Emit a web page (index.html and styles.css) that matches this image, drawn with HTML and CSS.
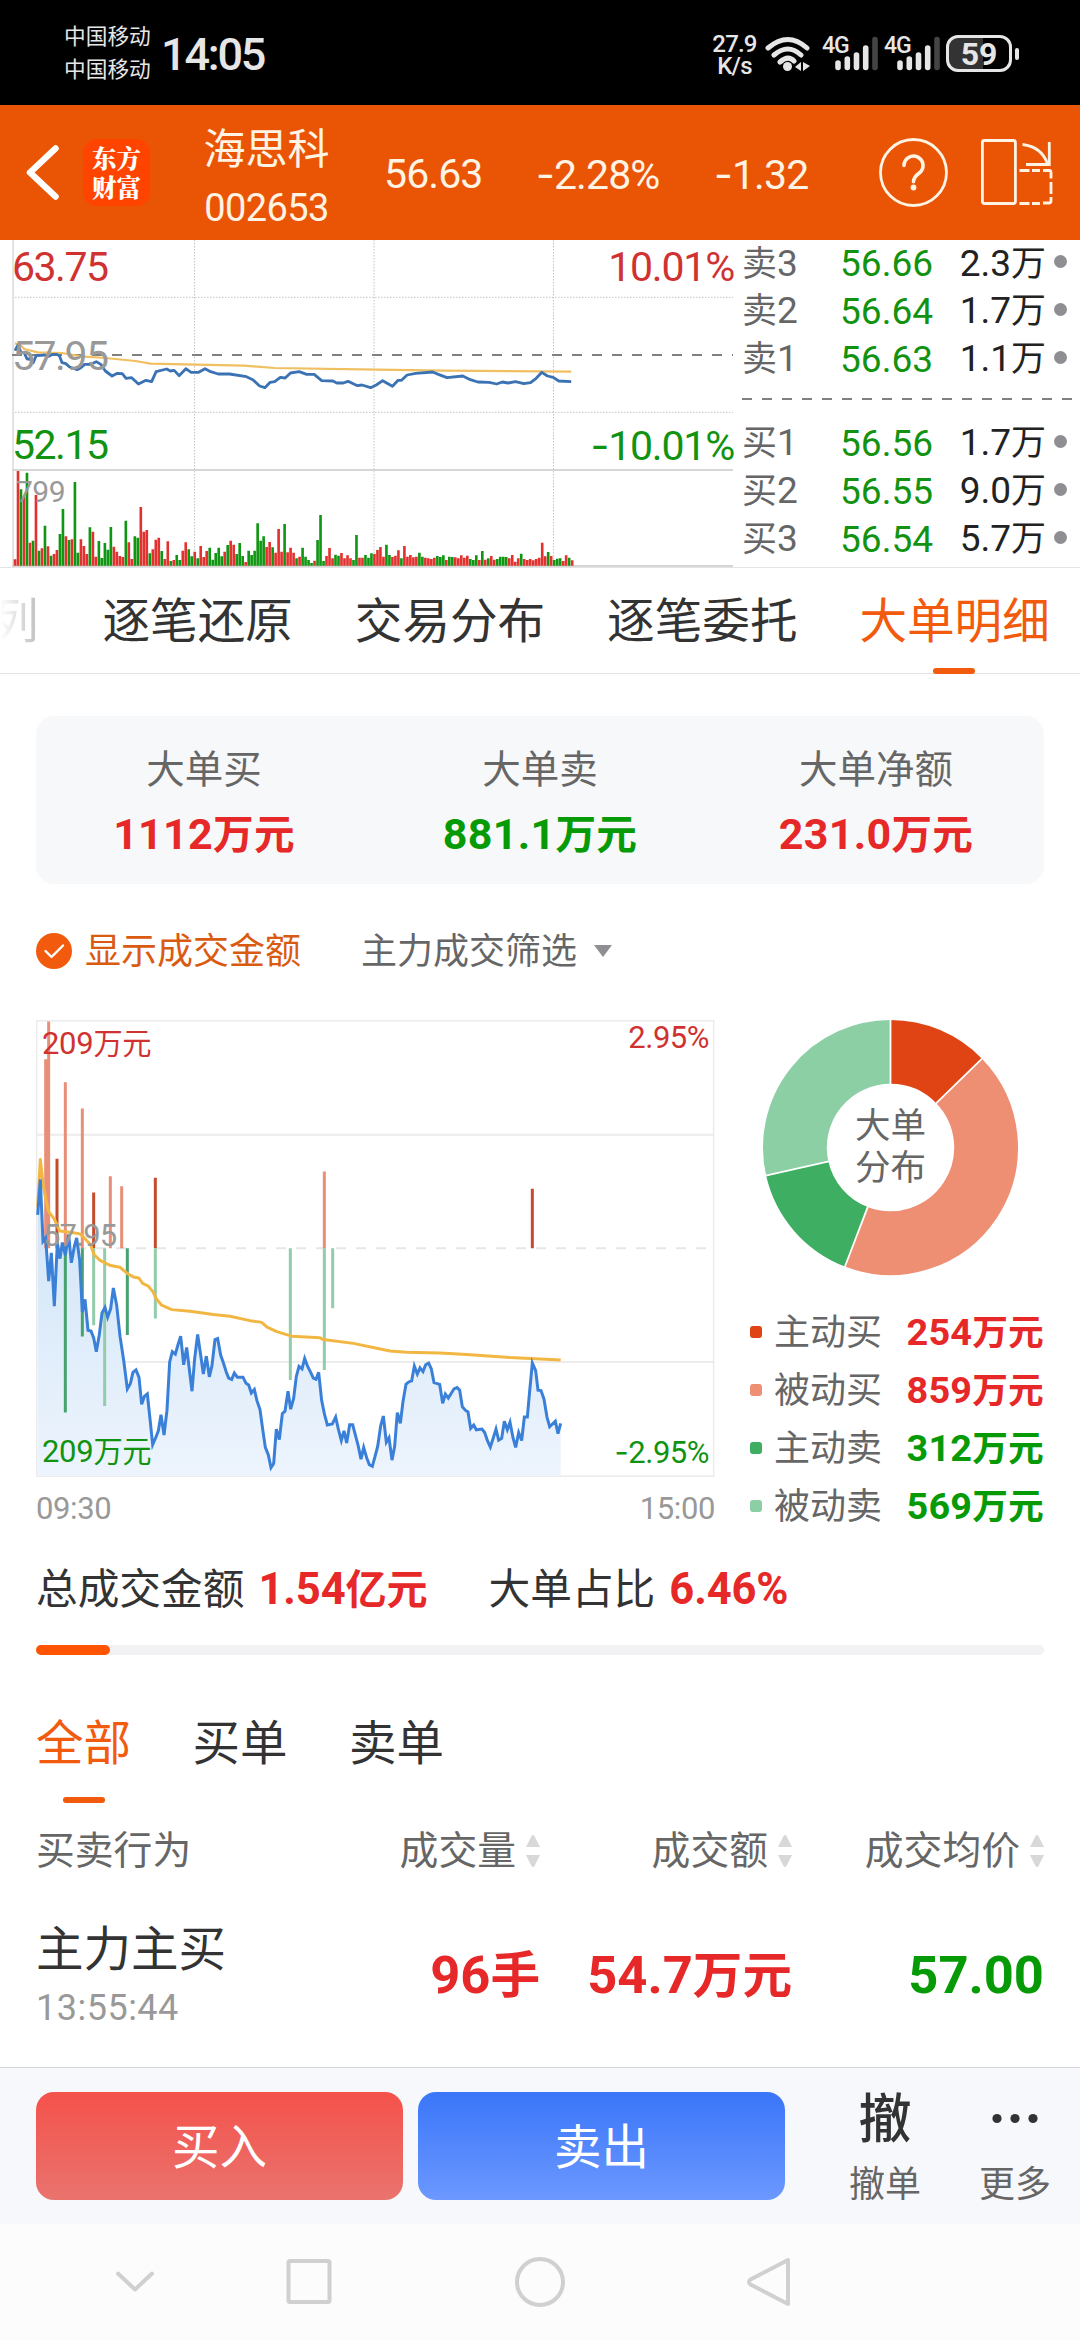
FILE: index.html
```html
<!DOCTYPE html>
<html lang="zh-CN">
<head>
<meta charset="utf-8">
<title>海思科 002653</title>
<link rel="stylesheet" href="styles.css">
</head>
<body>
<div class="status">
  <div class="carriers"><span>中国移动</span><span>中国移动</span></div>
  <div class="clock">14:05</div>
  <div class="netspeed"><span>27.9</span><span>K/s</span></div>
  <svg class="wifi" width="46" height="36" viewBox="0 0 46 36" fill="none" stroke="#e6e6e6" stroke-width="5" stroke-linecap="round">
    <path d="M3 12Q23 -5 42 12M9 19Q23 7 36 19M15 26Q23 19 29 25"/>
    <circle cx="22.500" cy="30.500" r="4.500" fill="#e6e6e6" stroke="none"/>
    <path d="M36 26v9l-6-4zM38 26v9l7-5z" fill="#e6e6e6" stroke="none"/>
  </svg>
  <div class="signal"><span>4G</span>
    <svg width="52" height="36" viewBox="0 0 52 36" stroke="#e6e6e6" stroke-width="5.600" stroke-linecap="round"><path d="M10 28v4.500M19.300 24v8.500M28.500 20v12.500M37.700 13v19.500"/><path d="M47 4.500v28" stroke="#444"/></svg>
  </div>
  <div class="signal second"><span>4G</span>
    <svg width="52" height="36" viewBox="0 0 52 36" stroke="#e6e6e6" stroke-width="5.600" stroke-linecap="round"><path d="M10 28v4.500M19.300 24v8.500M28.500 20v12.500M37.700 13v19.500"/><path d="M47 4.500v28" stroke="#444"/></svg>
  </div>
  <div class="battery"><span>59</span></div>
  <i class="battery-tip"></i>
</div>

<header class="header">
  <svg class="back" width="83" height="135" viewBox="0 0 83 135" fill="none" stroke="#fff" stroke-width="6.500" stroke-linecap="round" stroke-linejoin="round"><path d="M55.500 43.500L30 67.500L55.500 91.500"/></svg>
  <div class="logo"><span>东方</span><span>财富</span></div>
  <div class="stock"><b>海思科</b><span>002653</span></div>
  <div class="quote">56.63</div>
  <div class="quote"><s>-</s>2.28%</div>
  <div class="quote"><s>-</s>1.32</div>
  <svg width="70" height="135" viewBox="0 0 70 135" fill="none" stroke="#fff3e4" stroke-width="2.800" stroke-linecap="round"><circle cx="35.500" cy="67.500" r="33"/><path d="M26 60.500a9.500 9.500 0 1 1 15 7.800q-5.500 4-5.500 8.400" stroke-width="3.600"/><circle cx="35.500" cy="82.500" r="2.900" fill="#fff3e4" stroke="none"/></svg>
  <svg class="rotate" width="80" height="135" viewBox="0 0 80 135" fill="none" stroke="#fff3e4" stroke-width="2.800"><rect x="4.400" y="35.500" width="33" height="63" rx="2"/><path d="M44.500 39.500Q64 42 69.500 59M71.300 37v22.500H48"/><path d="M41.500 65.500h10M54 65.500h8M65 65.500h6a2 2 0 0 1 2 2v6M73 77v12M73 92v4a2 2 0 0 1-2 2h-6M62 98.500h-8M51.500 98.500h-10"/></svg>
</header>

<section class="market">
  <div class="minute">
    <svg width="721" height="327" viewBox="32 15 1916 981" preserveAspectRatio="none" fill="none">
      <g class="grid" stroke="#c4c4c4" stroke-dasharray="1.500 1.500"><path d="M517 15V992M994 15V992M1471 15V992M32 187H1948M32 532H1948"/></g>
      <path class="thin" d="M35 15V992" stroke="#e2e2e2" stroke-width="2"/>
      <path class="thin" d="M32 705H1948M32 993H1948" stroke="#d6d6d6" stroke-width="2"/>
      <path class="thin" d="M32 360H1948" stroke="#808080" stroke-width="1.800" stroke-dasharray="10 10"/>
      <g id="volume" stroke-width="7"></g>
      <polyline class="thin" stroke="#efbf60" stroke-width="2.200" points="40,325 52,328 65,342 100,352 165,354 215,364 280,369 360,378 400,386 520,389 650,392 730,399 1000,404 1180,407 1518,410"/>
      <polyline class="thin" stroke="#3a72b4" stroke-width="2.800" stroke-linejoin="round" points="40,347 48,330 56,352 64,352 72,372 80,372 88,384 96,362 120,360 130,364 140,358 150,358 158,362 165,383 175,386 185,396 205,404 215,398 225,388 240,388 256,380 268,388 280,408 298,423 312,415 325,416 335,430 350,428 368,447 388,436 403,440 415,410 443,402 453,408 463,406 476,422 494,401 508,412 528,412 545,401 560,410 580,417 610,417 655,425 672,434 690,453 704,458 718,442 730,440 745,427 758,429 772,414 795,410 815,418 835,418 855,437 885,438 895,444 912,444 925,439 950,452 962,450 985,458 1000,450 1017,437 1043,454 1058,436 1067,436 1082,420 1105,415 1150,411 1165,418 1188,428 1230,423 1250,434 1270,441 1300,442 1320,447 1335,441 1350,444 1370,440 1392,446 1410,443 1425,430 1440,412 1455,423 1470,427 1485,438 1518,440"/>
    </svg>
    <span class="mark high">63.75</span><span class="mark mid">57.95</span><span class="mark low">52.15</span>
    <span class="mark vol">799</span><span class="mark high end">10.01%</span><span class="mark low end"><s>-</s>10.01%</span>
  </div>
  <div class="book">
    <div class="level first"><span><u>卖</u>3</span><em>56.66</em><b>2.3<u>万</u></b><i></i></div>
    <div class="level"><span><u>卖</u>2</span><em>56.64</em><b>1.7<u>万</u></b><i></i></div>
    <div class="level"><span><u>卖</u>1</span><em>56.63</em><b>1.1<u>万</u></b><i></i></div>
    <div class="spread"></div>
    <div class="level"><span><u>买</u>1</span><em>56.56</em><b>1.7<u>万</u></b><i></i></div>
    <div class="level"><span><u>买</u>2</span><em>56.55</em><b>9.0<u>万</u></b><i></i></div>
    <div class="level"><span><u>买</u>3</span><em>56.54</em><b>5.7<u>万</u></b><i></i></div>
  </div>
</section>

<nav class="tabs">
  <span class="cut">列</span><span>逐笔还原</span><span>交易分布</span><span>逐笔委托</span><span class="on">大单明细</span>
</nav>

<section class="summary">
  <div><span>大单买</span><b class="red">1112<u>万元</u></b></div>
  <div><span>大单卖</span><b class="green">881.1<u>万元</u></b></div>
  <div><span>大单净额</span><b class="red">231.0<u>万元</u></b></div>
</section>

<div class="filters">
  <svg width="36" height="36" viewBox="0 0 36 36"><circle cx="18" cy="18" r="18" fill="#f25a0d"/><path d="M9.500 18l6 6L27 12.500" fill="none" stroke="#fff" stroke-width="2.400" stroke-linecap="round" stroke-linejoin="round"/></svg>
  <span class="show">显示成交金额</span><span>主力成交筛选</span>
  <svg class="caret" width="18" height="12" viewBox="0 0 18 12"><path d="M0 0h18L9 12z" fill="#8e8e93"/></svg>
</div>

<section class="orders">
  <div class="trend">
    <div class="plot">
    <svg width="679" height="457" viewBox="48 57 2037 1327" preserveAspectRatio="none" fill="none">
      <defs><linearGradient id="fill" x1="0" y1="0" x2="0" y2="1"><stop offset="0" stop-color="#cfe4f7"/><stop offset="1" stop-color="#edf4fd"/></linearGradient></defs>
      <path class="thin" d="M48 390H2082M48 1050H2082" stroke="#ececec" stroke-width="2"/>
      <path class="thin" d="M50 59V1382H2081V59Z" stroke="#ebebeb" stroke-width="1.500"/>
      <path class="thin" d="M48 720H2081" stroke="#e6e6e6" stroke-width="2" stroke-dasharray="10 10"/>
      <path id="area" fill="url(#fill)"/>
      <g stroke-width="9">
        <path stroke="#e88f77" d="M77 171V720M86 61V720M136 238V720M187 314V720M271 511V720M305 540V720M913 497V720"/>
        <path stroke="#c24c2c" d="M111 460V720M221 558V720M406 515V720M1537 547V720"/>
        <path stroke="#47a270" d="M136 720V1197M187 720V976M322 720V972"/>
        <path stroke="#92ccaa" d="M221 720V943M254 720V1178M406 720V924M811 720V1102M913 720V1073M938 720V894"/>
      </g>
      <polyline class="thin" stroke="#f2b742" stroke-width="3" stroke-linejoin="round" points="53,600 61,462 70,540 78,580 85,612 103,635 112,655 120,670 160,675 180,678 195,692 212,710 222,738 240,755 272,770 300,775 322,793 340,803 356,806 368,822 385,830 398,845 410,868 425,885 455,898 510,903 580,912 630,917 690,930 725,935 740,948 770,962 815,975 900,980 910,985 1000,996 1070,1010 1110,1018 1160,1022 1260,1024 1340,1028 1470,1037 1622,1044"/>
      <polyline id="price" class="thin" stroke="#3a80d8" stroke-width="3" stroke-linejoin="miter" points="53,623 61,520 69,700 77,690 86,815 94,733 103,888 112,705 120,750 127,703 136,740 146,680 154,762 163,715 170,690 179,755 187,905 195,868 204,958 213,960 221,980 229,1020 238,970 246,908 255,892 263,920 272,895 280,835 290,885 300,975 311,1045 322,1128 331,1113 339,1080 348,1073 357,1095 365,1173 373,1150 382,1143 390,1215 398,1290 407,1270 415,1250 423,1203 432,1262 441,1190 449,1050 457,1020 466,1027 474,1000 482,975 491,1058 500,1008 516,1135 524,1040 533,970 542,1030 550,1085 559,1033 568,1093 576,1060 585,985 593,982 602,1030 611,1055 619,1080 626,1097 635,1101 643,1082 652,1094 669,1094 678,1112 686,1117 694,1140 703,1130 711,1163 720,1188 728,1245 736,1298 745,1320 753,1357 761,1345 769,1245 778,1275 787,1200 795,1193 804,1135 812,1187 821,1155 829,1092 837,1063 846,1070 854,1040 863,1063 872,1080 880,1097 888,1100 896,1080 905,1162 913,1200 922,1233 937,1230 947,1210 955,1245 964,1278 972,1250 980,1285 989,1232 998,1232 1006,1262 1015,1295 1023,1332 1031,1298 1040,1328 1048,1348 1057,1353 1065,1325 1073,1295 1082,1235 1090,1207 1099,1283 1107,1270 1116,1335 1124,1295 1132,1197 1141,1228 1149,1165 1158,1115 1166,1108 1175,1105 1183,1062 1192,1085 1200,1067 1209,1078 1217,1058 1226,1053 1234,1070 1242,1110 1259,1115 1268,1170 1276,1143 1285,1155 1302,1128 1311,1124 1319,1132 1327,1180 1336,1190 1344,1195 1352,1243 1361,1233 1369,1247 1386,1245 1394,1255 1402,1278 1411,1297 1420,1270 1428,1245 1436,1277 1445,1272 1453,1222 1462,1247 1470,1225 1479,1270 1487,1298 1496,1255 1505,1278 1513,1210 1522,1210 1529,1135 1537,1053 1547,1075 1554,1132 1563,1133 1572,1158 1581,1210 1589,1238 1606,1222 1614,1258 1622,1228"/>
    </svg>
    <span class="tag top red">209<u>万元</u></span><span class="tag base">57.95</span><span class="tag bottom">209<u>万元</u></span>
    <span class="tag top end">2.95%</span><span class="tag bottom end"><s>-</s>2.95%</span>
    </div>
    <div class="axis"><span>09:30</span><span>15:00</span></div>
  </div>
  <div class="share">
    <div class="donut">
      <svg width="257" height="257" viewBox="-128.500 -128.500 257 257"><g id="slices" fill="none" stroke-width="63.800"></g></svg>
      <p>大单<br>分布</p>
    </div>
    <ul>
      <li><i class="c1"></i><span>主动买</span><b class="red">254<u>万元</u></b></li>
      <li><i class="c2"></i><span>被动买</span><b class="red">859<u>万元</u></b></li>
      <li><i class="c3"></i><span>主动卖</span><b class="green">312<u>万元</u></b></li>
      <li><i class="c4"></i><span>被动卖</span><b class="green">569<u>万元</u></b></li>
    </ul>
  </div>
</section>

<div class="totals"><span>总成交金额</span><b>1.54<u>亿元</u></b><span class="ratio">大单占比</span><b>6.46%</b></div>
<div class="progress"><i></i></div>

<nav class="subtabs"><span class="on">全部</span><span>买单</span><span>卖单</span></nav>

<div class="row head">
  <span>买卖行为</span>
  <span>成交量<svg width="14" height="32" viewBox="0 0 14 32"><path d="M7 0q1 0 1.500 1L14 12H0L5.500 1Q6 0 7 0zM0 20h14L8.500 31q-1.500 2-3 0z"/></svg></span>
  <span>成交额<svg width="14" height="32" viewBox="0 0 14 32"><path d="M7 0q1 0 1.500 1L14 12H0L5.500 1Q6 0 7 0zM0 20h14L8.500 31q-1.500 2-3 0z"/></svg></span>
  <span>成交均价<svg width="14" height="32" viewBox="0 0 14 32"><path d="M7 0q1 0 1.500 1L14 12H0L5.500 1Q6 0 7 0zM0 20h14L8.500 31q-1.500 2-3 0z"/></svg></span>
</div>
<div class="row deal">
  <div class="who"><span>主力主买</span><time>13:55:44</time></div>
  <b class="red">96<u>手</u></b><b class="red">54.7<u>万元</u></b><b class="green">57.00</b>
</div>

<footer class="actions">
  <button class="buy">买入</button><button class="sell">卖出</button>
  <div class="tool cancel"><b>撤</b><span>撤单</span></div>
  <div class="tool"><svg width="54" height="50" viewBox="0 0 54 50" fill="#333"><circle cx="9" cy="25" r="4.600"/><circle cx="27" cy="25" r="4.600"/><circle cx="45" cy="25" r="4.600"/></svg><span>更多</span></div>
</footer>
<div class="sysnav">
  <svg width="1080" height="116" viewBox="0 0 1080 116" fill="none" stroke="#d0d0d0" stroke-width="4" stroke-linecap="round" stroke-linejoin="round"><path d="M118 49.500l17 16 17-16"/><rect x="288.500" y="37" width="41" height="41" rx="1.500"/><circle cx="540" cy="58" r="23"/><path d="M788 36v44L750.500 60.500q-3-2.500 0-5z"/></svg>
</div>
<script src="charts.js"></script>
</body>
</html>
```
FILE: charts.js
```js
const SVG = 'http://www.w3.org/2000/svg';

function add(parent, attrs) {
  const node = document.createElementNS(SVG, 'path');
  for (const key in attrs) node.setAttribute(key, attrs[key]);
  parent.appendChild(node);
}

// One entry per minute: r = up, g = down, followed by the y of the bar's top.
const volume = ('r973 r708 g763 r785 g713 r923 g917 r780 g947 r940 g872 r934 g962 r957 r945 g897 g822 r904 g915 r913 ' +
  'g741 g953 r913 r933 r957 g877 r890 r965 g918 g969 g924 g944 g876 r935 r950 r963 r966 g857 r922 r972 ' +
  'g904 g908 r816 r890 r885 g955 r943 r914 r908 g948 r972 r919 g978 r975 g960 g975 r947 r922 g943 g964 ' +
  'r950 g970 r933 r966 r948 g938 g974 g954 g938 g964 r950 g930 r917 r929 g957 g924 g963 r981 g947 g960 ' +
  'g947 g865 g917 g904 r936 r921 g937 r953 r882 r950 g867 r952 r938 r953 g970 r965 g938 g965 g975 g984 ' +
  'r977 g915 g840 g978 r963 r939 r970 g959 g962 r954 r970 r961 r970 g975 g900 r968 r968 g960 g968 g955 ' +
  'r957 r945 r936 r965 g929 g960 r966 r962 r946 g970 r933 r965 r960 r967 r965 g953 g965 r968 r970 r972 ' +
  'r968 g963 g966 g961 r975 g965 g966 r967 r970 r961 r968 r962 g972 g975 g961 r975 g948 r974 g970 r963 ' +
  'r974 g972 g965 g965 g966 r970 r960 r980 r970 g956 r972 r975 r972 r976 r972 r968 r923 r964 g951 r963 ' +
  'g975 g971 g970 r978 r961 g968 r976').split(' ');
const bars = { r: '', g: '' };
volume.forEach((v, i) => { bars[v[0]] += `M${(40 + 7.96 * i).toFixed(1)} 992V${v.slice(1)}`; });
const group = document.getElementById('volume');
add(group, { d: bars.r, stroke: '#e2322f' });
add(group, { d: bars.g, stroke: '#109612' });

const price = document.getElementById('price').getAttribute('points');
document.getElementById('area').setAttribute('d', `M53 1380L${price} 1622,1380Z`);

const shares = [[254, '#e04415'], [859, '#ee8f74'], [312, '#3dae62'], [569, '#8ccfa4']];
const total = shares.reduce((sum, s) => sum + s[0], 0);
const slices = document.getElementById('slices');
const at = (r, a) => `${(r * Math.sin(a)).toFixed(2)} ${(-r * Math.cos(a)).toFixed(2)}`;
let start = 0;
const edges = [];
for (const [value, color] of shares) {
  const end = start + value / total * 2 * Math.PI;
  add(slices, { d: `M${at(95.6, start)}A95.6 95.6 0 0 1 ${at(95.6, end)}`, stroke: color });
  edges.push(`M${at(62, start)}L${at(129, start)}`);
  start = end;
}
add(slices, { d: edges.join(''), stroke: '#fff', 'stroke-width': 1.8 });
```
FILE: styles.css
```css
* { box-sizing: border-box; }
body { margin: 0; width: 1080px; height: 2340px; overflow: hidden; background: #fff; color: #333; font-family: Roboto, "Noto Sans CJK SC", sans-serif; line-height: 1; }
u { text-decoration: none; font-size: .945em; }
s { text-decoration: none; font-family: Inter, sans-serif; }
em, i { font-style: normal; }
svg { display: block; flex: none; }
.thin, .grid path { vector-effect: non-scaling-stroke; }
.red { color: #e62828; }
.green { color: #079a07; }

.status { height: 105px; background: #000; color: #e6e6e6; display: flex; padding-left: 64px; }
.carriers { display: flex; flex-direction: column; width: 97px; padding-top: 20px; font-size: 21.7px; line-height: 33px; white-space: nowrap; }
.clock { width: 550px; font-size: 45px; font-weight: 500; line-height: 110px; letter-spacing: -2.2px; }
.netspeed { width: 47px; padding-top: 34px; display: flex; flex-direction: column; align-items: center; font-size: 24px; font-weight: 500; line-height: 21.500px; letter-spacing: -.8px; }
.wifi { margin: 36px 17px 0 7px; }
.signal { width: 62px; display: flex; padding-top: 35px; margin-left: -6px; position: relative; }
.signal.second { margin-left: 0; }
.signal svg { margin-left: 6px; }
.signal span { position: absolute; left: 0; top: 0; line-height: 91px; font-size: 23px; font-weight: 500; letter-spacing: -1px; }
.battery { margin: 35px 3px 0 0; width: 66px; height: 37px; border: 3px solid #e6e6e6; border-radius: 12px; background: linear-gradient(90deg, #333 57%, #000 57%); font-size: 32px; font-weight: 700; line-height: 32px; text-align: center; }
.battery-tip { width: 4px; height: 12px; margin-top: 48px; border-radius: 2px; background: #e6e6e6; }

.header { height: 135px; background: #e95504; color: #fff3e4; display: grid; grid-template-columns: 83px 67px 233px 152px 178px 165px 100px 80px; align-items: center; }
.logo { width: 67px; height: 67px; border-radius: 14px; background: #ff4400; color: #fff; display: flex; flex-direction: column; align-items: center; justify-content: center; font: 900 24.500px/29px "Noto Serif CJK SC", "Noto Sans CJK SC", sans-serif; padding-bottom: 1px; }
.stock { display: flex; flex-direction: column; align-items: center; padding-top: 11px; }
.stock b { font-weight: 400; font-size: 42px; line-height: 60px; }
.stock span { font-size: 38px; line-height: 56px; letter-spacing: -.6px; }
.quote { font-size: 41px; line-height: 60px; letter-spacing: -.9px; padding: 3px 0 0 1px; white-space: nowrap; }

.market { height: 328px; display: grid; grid-template-columns: 742px 338px; border-bottom: 1px solid #e4e4e4; }
.minute { position: relative; padding-left: 12px; }
.mark { position: absolute; font-size: 41px; line-height: 40px; letter-spacing: -1.5px; left: 12px; }
.mark.end { left: auto; right: 8px; letter-spacing: -1.2px; }
.high { top: 7px; color: #d03232; }
.mid { top: 96px; color: #999; }
.low { top: 185px; color: #119311; }
.mark.vol { top: 232px; left: 16px; color: #999; font-size: 30px; letter-spacing: -.5px; }
.level { height: 48px; display: grid; grid-template-columns: 71px 120px 113px 34px; align-items: center; font-size: 37px; }
.level.first { height: 47px; }
.level span { color: #666; white-space: nowrap; }
.level em { color: #119311; text-align: right; }
.level b { color: #222; font-weight: 400; text-align: right; }
.level i { width: 13px; height: 13px; border-radius: 50%; background: #8e8e93; margin: -4px 0 0 8px; }
.spread { height: 36px; margin-right: 8px; background: repeating-linear-gradient(90deg, #808080 0 10px, transparent 10px 20px) 0 15px / 100% 2px no-repeat; }

.tabs { height: 106px; border-bottom: 1px solid #e4e4e4; display: flex; font-size: 47.600px; line-height: 109px; white-space: nowrap; }
.tabs span { flex: none; width: 252.300px; position: relative; }
.tabs .cut { width: 102.500px; text-indent: -9px; background: linear-gradient(90deg, #fff, #bbb 40px); -webkit-background-clip: text; background-clip: text; color: transparent; }
.tabs .on, .subtabs .on { color: #f25a0d; }
.tabs .on::after { content: ""; position: absolute; left: 74px; bottom: -1px; width: 42px; height: 6px; border-radius: 3px; background: #f25a0d; }

.summary { margin: 42px 36px 0; height: 168px; border-radius: 18px; background: #f7f8fa; display: grid; grid-template-columns: repeat(3, 1fr); text-align: center; }
.summary div { display: flex; flex-direction: column; padding-top: 24px; }
.summary span { font-size: 38.500px; line-height: 60px; color: #666; }
.summary b { font-size: 43px; line-height: 69px; letter-spacing: .3px; }

.filters { height: 136px; padding: 0 36px 2px; display: flex; align-items: center; font-size: 36px; color: #666; }
.filters .show { margin: 0 60px 0 13px; color: #d95b12; }
.filters span { padding-top: 2px; }
.filters .caret { margin-left: 17px; }

.orders { display: flex; padding-left: 36px; }
.trend { width: 679px; margin-right: 35px; }
.plot { position: relative; height: 457px; }
.tag { position: absolute; left: 6px; font-size: 31px; line-height: 30px; letter-spacing: -.3px; }
.tag.end { left: auto; right: 6px; letter-spacing: -.5px; }
.top { top: 9px; color: #d03232; }
.top.end { top: 3px; }
.tag.base { top: 201px; left: 7px; color: #999; letter-spacing: -.9px; }
.bottom { top: 417px; color: #119311; }
.axis { display: flex; justify-content: space-between; font-size: 31px; line-height: 63px; height: 62px; color: #999; letter-spacing: -.4px; }
.share { width: 294px; }
.donut { position: relative; margin-left: 12px; width: 257px; height: 257px; top: -1px; }
.donut p { position: absolute; inset: 0; margin: 0; padding-top: 86px; text-align: center; font-size: 35.500px; line-height: 42px; color: #666; }
.share ul { margin: 27px 0 0; padding: 0; list-style: none; }
.share li { height: 58px; display: grid; grid-template-columns: 24px 130px 1fr; align-items: center; font-size: 36px; color: #666; }
.share i { width: 12px; height: 12px; border-radius: 3px; margin-top: -2px; }
.share b { text-align: right; font-size: 37.800px; letter-spacing: .2px; white-space: nowrap; }
.c1 { background: #e04415; } .c2 { background: #ee8f74; } .c3 { background: #3dae62; } .c4 { background: #8ccfa4; }

.totals { height: 100px; margin-top: 1px; padding-left: 36px; display: flex; align-items: center; font-size: 41.700px; }
.totals b { margin-left: 14px; font-size: 43.500px; letter-spacing: -.1px; color: #e62828; }
.totals .ratio { margin-left: 61px; }
.progress { height: 10px; margin: 5px 36px 0; border-radius: 5px; background: #f2f2f4; }
.progress i { display: block; width: 74px; height: 10px; border-radius: 5px; background: #ff5500; }

.subtabs { height: 148px; padding-left: 36px; display: flex; font-size: 47.500px; line-height: 178px; }
.subtabs span { width: 156.500px; position: relative; }
.subtabs .on::after { content: ""; position: absolute; left: 27px; top: 142px; width: 42px; height: 6px; border-radius: 3px; background: #f25a0d; }

.row { display: grid; grid-template-columns: 300px 204px 252px 252px; padding-left: 36px; align-items: center; }
.head { height: 96px; font-size: 38.800px; color: #666; }
.head span { display: flex; align-items: center; justify-content: flex-end; gap: 10px; }
.head span:first-child { justify-content: flex-start; }
.head svg { fill: #d8d8d8; }
.deal { height: 168px; }
.deal b { font-size: 52.500px; text-align: right; padding-bottom: 16px; }
.deal .who { display: flex; flex-direction: column; height: 100%; padding-top: 20px; }
.deal .who span { font-size: 47.500px; line-height: 62px; }
.deal time { font-size: 36px; line-height: 54px; color: #999; letter-spacing: .5px; }

.actions { height: 157px; border-top: 1px solid #d3d7dc; background: #f6f8fb; padding: 24px 0 0 36px; display: flex; }
.actions button { width: 367px; height: 108px; margin: 0 15px 0 0; border: 0; border-radius: 18px; color: #fff; font: 400 47.500px/104px "Noto Sans CJK SC", sans-serif; padding: 0 0 4px; }
.buy { background: linear-gradient(#f4524b, #ea736e); }
.sell { background: linear-gradient(#3a76f9, #6c98ff); }
.tool { width: 130px; display: flex; flex-direction: column; align-items: center; }
.cancel { margin-left: 20px; }
.tool b { font-size: 53px; font-weight: 500; line-height: 56px; height: 53px; }
.tool svg { height: 53px; }
.tool span { font-size: 36px; line-height: 81px; color: #666; }
.sysnav { height: 116px; background: #fcfcfc; }
```
